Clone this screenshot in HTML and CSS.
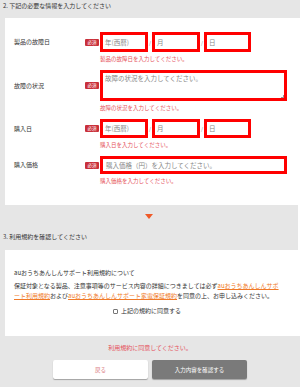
FILE: index.html
```html
<!DOCTYPE html>
<html lang="ja">
<head>
<meta charset="utf-8">
<link rel="stylesheet" href="styles.css">
</head>
<body>
<div class="page">
  <h2 class="sec-title sec-title--first">2. 下記の必要な情報を入力してください</h2>
  <div class="main">
    <section class="card form">
      <div class="row">
        <div class="label">製品の故障日</div>
        <div class="badge-cell"><span class="badge">必須</span></div>
        <div class="field date h20">
          <div class="box box-y">年(西暦)</div><span class="sep">/</span>
          <div class="box box-m">月</div><span class="sep">/</span>
          <div class="box box-d">日</div>
        </div>
        <div class="error">製品の故障日を入力してください。</div>
      </div>
      <div class="row">
        <div class="label">故障の状況</div>
        <div class="badge-cell"><span class="badge">必須</span></div>
        <div class="field">
          <div class="box textarea">故障の状況を入力してください。<span class="grip"></span></div>
        </div>
        <div class="error">故障の状況を入力してください。</div>
      </div>
      <div class="row">
        <div class="label">購入日</div>
        <div class="badge-cell"><span class="badge">必須</span></div>
        <div class="field date h19">
          <div class="box box-y">年(西暦)</div><span class="sep">/</span>
          <div class="box box-m">月</div><span class="sep">/</span>
          <div class="box box-d">日</div>
        </div>
        <div class="error">購入日を入力してください。</div>
      </div>
      <div class="row">
        <div class="label">購入価格</div>
        <div class="badge-cell"><span class="badge">必須</span></div>
        <div class="field">
          <div class="box text">購入価格（円）を入力してください。</div>
        </div>
        <div class="error">購入価格を入力してください。</div>
      </div>
    </section>
    <div class="arrow"></div>
    <h2 class="sec-title">3. 利用規約を確認してください</h2>
    <section class="card terms">
      <p class="terms-title">auおうちあんしんサポート利用規約について</p>
      <p class="terms-text">保証対象となる製品、注意事項等のサービス内容の詳細につきましては必ず<a class="link">auおうちあんしんサポ</a><a class="link">ート利用規約</a>および<a class="link">auおうちあんしんサポート家電保証規約</a>を同意の上、お申し込みくださ<span>い。</span></p>
      <label class="check"><span class="checkbox"></span>上記の規約に同意する</label>
    </section>
  </div>
  <p class="agree-error">利用規約に同意してください。</p>
  <div class="buttons">
    <button class="btn btn-back">戻る</button>
    <button class="btn btn-confirm">入力内容を確認する</button>
  </div>
</div>
</body>
</html>
```

FILE: styles.css
```css
* { box-sizing: border-box; }
html, body { margin: 0; padding: 0; }
body {
  background: #e6e6e6;
  font-family: "Noto Sans CJK JP", "Noto Sans", sans-serif;
  color: #333;
  width: 300px;
  height: 387px;
  overflow: hidden;
}
.page { width: 300px; }
.sec-title {
  margin: 0;
  font-size: 6px;
  font-weight: normal;
  line-height: 8px;
  color: #333;
  padding-left: 3px;
}
.sec-title--first { height: 18px; padding-top: 2px; }
.main { border-right: 2px solid #fff; }
.card {
  background: #fff;
  margin: 0 0 0 5px;
}
.form {
  height: 187px;
  padding: 14px 0 0 9px;
}
.row {
  display: grid;
  grid-template-columns: 71px 15px 187px;
  grid-template-areas: "label badge field" ". . error";
  margin-bottom: 7px;
}
.label {
  grid-area: label;
  align-self: center;
  font-size: 6px;
  line-height: 8px;
  color: #333;
}
.badge-cell { grid-area: badge; align-self: center; display: flex; }
.badge {
  display: block;
  width: 14px;
  height: 7px;
  background: #c9303a;
  color: #fff;
  font-size: 4.5px;
  line-height: 7px;
  text-align: center;
  border-radius: 1px;
}
.field { grid-area: field; display: flex; align-items: center; }
.error {
  grid-area: error;
  margin-top: 4px;
  font-size: 5.5px;
  line-height: 7px;
  color: #e5505a;
}
.box {
  border: 3px solid #ff0000;
  background: #fff;
  color: #888;
  font-size: 6.5px;
  line-height: 9px;
  padding: 0 2px;
}
.date .box { height: 100%; display: flex; align-items: center; }
.h20 { height: 20px; }
.h19 { height: 19px; }
.box-y { width: 48px; }
.box-m { width: 48px; }
.box-d { width: 47px; }
.sep {
  width: 4px;
  text-align: center;
  font-size: 5px;
  color: #888;
}
.textarea {
  position: relative;
  width: 187px;
  height: 31px;
  padding-top: 1px;
}
.grip {
  position: absolute;
  right: 0;
  bottom: 0;
  width: 3px;
  height: 3px;
  border-right: 1px solid #999;
  border-bottom: 1px solid #999;
}
.text {
  width: 187px;
  height: 18px;
  display: flex;
  align-items: center;
  padding-left: 3px;
}
.arrow {
  width: 0;
  height: 0;
  margin: 9px auto 0;
  border-left: 4px solid transparent;
  border-right: 4px solid transparent;
  border-top: 5px solid #f05a28;
}
.main > .sec-title { margin-top: 14px; margin-bottom: 9px; }
.terms {
  height: 86px;
  padding: 19px 18px 0 9px;
}
.terms-title {
  margin: 0;
  font-size: 6px;
  line-height: 8px;
  color: #333;
}
.terms-text {
  margin: 4px 0 0;
  font-size: 6px;
  line-height: 10px;
  color: #333;
}
.link { color: #f07a28; text-decoration: underline; }
.check {
  display: flex;
  justify-content: center;
  align-items: center;
  margin-top: 6px;
  font-size: 6px;
  line-height: 8px;
  color: #333;
}
.checkbox {
  width: 5px;
  height: 5px;
  border: 1px solid #777;
  border-radius: 1px;
  margin-right: 3px;
  background: #fff;
}
.agree-error {
  margin: 8px 0 0;
  text-align: center;
  font-size: 6px;
  line-height: 8px;
  color: #e5505a;
}
.buttons {
  display: flex;
  justify-content: center;
  gap: 4px;
  margin-top: 8px;
}
.btn {
  width: 95px;
  height: 19px;
  border: none;
  border-radius: 2px;
  font-family: inherit;
  font-size: 5.5px;
  padding: 0;
  box-shadow: 0 1px 1px rgba(0,0,0,0.3);
}
.btn-back { background: #fff; color: #d9777c; }
.btn-confirm { background: #7a7a7a; color: #fff; }
```
